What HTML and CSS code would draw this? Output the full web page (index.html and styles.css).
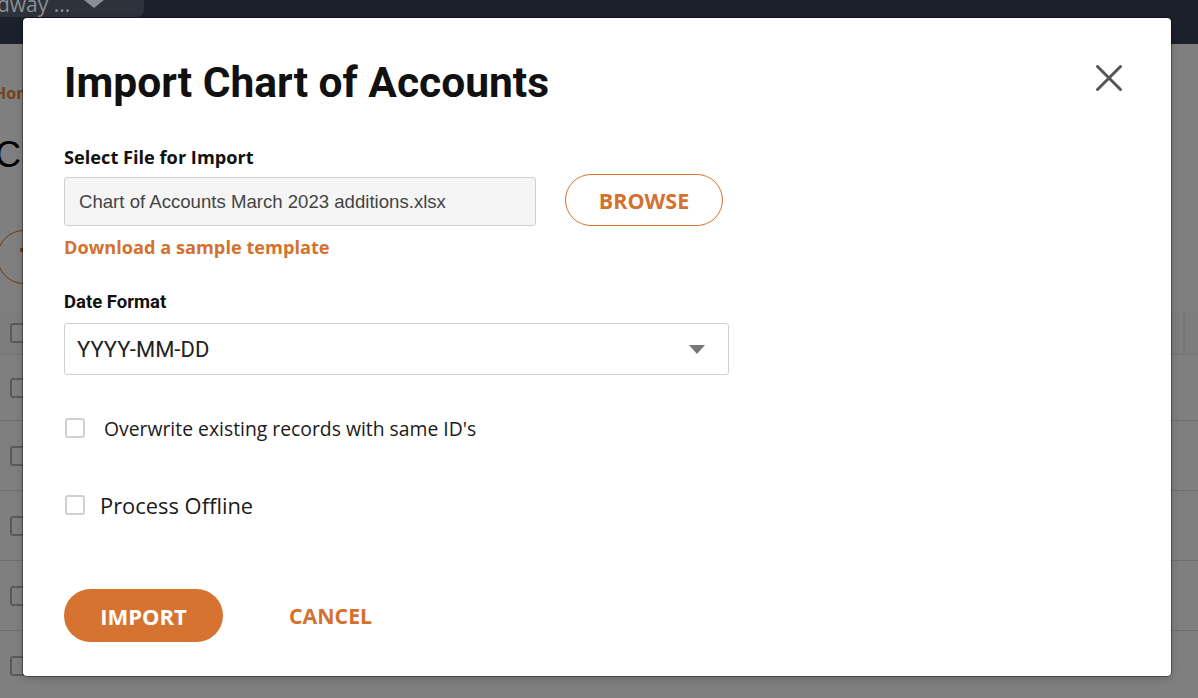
FILE: index.html
```html
<!DOCTYPE html>
<html lang="en">
<head>
<meta charset="utf-8">
<title>Import Chart of Accounts</title>
<link rel="stylesheet" href="styles.css">
</head>
<body>
<header class="topbar">
  <div class="loc-pill"><span class="loc-name">dway ...</span><span class="loc-caret"></span></div>
</header>
<main class="page">
  <div class="crumb">Home</div>
  <h1 class="page-title">Chart of Accounts</h1>
  <div class="circle-btn"><span class="circle-mark"></span></div>
  <div class="table">
    <div class="thead"><div class="cell-main"><span class="cb"></span></div><div class="cell-next"></div></div>
    <div class="row row-first"><span class="cb"></span></div>
    <div class="row"><span class="cb"></span></div>
    <div class="row"><span class="cb"></span></div>
    <div class="row"><span class="cb"></span></div>
    <div class="row"><span class="cb"></span></div>
  </div>
</main>
<div class="overlay"></div>
<div class="modal" role="dialog" aria-label="Import Chart of Accounts">
  <div class="modal-head">
    <h2 class="modal-title">Import Chart of Accounts</h2>
    <button class="close-btn" aria-label="Close">
      <svg width="32" height="32" viewBox="0 0 32 32"><path d="M4.5 4.5 L27.5 27.5 M27.5 4.5 L4.5 27.5" stroke="#555" stroke-width="3" stroke-linecap="round" fill="none"/></svg>
    </button>
  </div>
  <div class="field-label">Select File for Import</div>
  <div class="file-row">
    <div class="file-input">Chart of Accounts March 2023 additions.xlsx</div>
    <button class="btn-outline">BROWSE</button>
  </div>
  <a class="link">Download a sample template</a>
  <div class="date-label">Date Format</div>
  <div class="select"><span>YYYY-MM-DD</span><span class="caret"></span></div>
  <label class="check check-one"><span class="box"></span><span class="check-text">Overwrite existing records with same ID's</span></label>
  <label class="check check-two"><span class="box"></span><span class="check-text">Process Offline</span></label>
  <div class="actions">
    <button class="btn-primary">IMPORT</button>
    <button class="btn-text">CANCEL</button>
  </div>
</div>
</body>
</html>
```
FILE: styles.css
```css
* { box-sizing: border-box; }
html, body { margin: 0; padding: 0; }
body {
  width: 1198px;
  height: 698px;
  overflow: hidden;
  position: relative;
  background: #ffffff;
  font-family: "Open Sans", "Liberation Sans", sans-serif;
}

/* top bar */
.topbar {
  position: relative;
  z-index: 2;
  height: 44px;
  background: #1b202b;
  display: flex;
  align-items: flex-start;
}
.loc-pill {
  width: 144px;
  height: 17px;
  background: #2e323a;
  border-bottom-right-radius: 7px;
  display: flex;
  align-items: flex-end;
  overflow: hidden;
}
.loc-name {
  margin-left: -3px;
  font-family: "Open Sans", sans-serif;
  font-size: 21px;
  line-height: 21px;
  color: #8b8e94;
  margin-bottom: 2px;
  white-space: nowrap;
}
.loc-caret {
  margin-left: 14px;
  align-self: flex-start;
  width: 0;
  height: 0;
  border-left: 10px solid transparent;
  border-right: 10px solid transparent;
  border-top: 8px solid #8b8e94;
}

/* page behind */
.page {
  padding-top: 38px;
}
.crumb {
  margin-left: -6px;
  font-weight: 700;
  font-size: 16px;
  line-height: 22px;
  color: #e8853a;
}
.page-title {
  margin: 31px 0 0 -5px;
  font-family: "Liberation Sans", Arial, sans-serif;
  font-weight: 400;
  font-size: 36px;
  line-height: 40px;
  color: #000;
  white-space: nowrap;
}
.circle-btn {
  margin: 55px 0 0 -3px;
  width: 54px;
  height: 54px;
  border: 1.5px solid #d77330;
  border-radius: 50%;
  position: relative;
}
.circle-mark {
  position: absolute;
  left: 22px;
  top: 17px;
  width: 4px;
  height: 4px;
  background: #d77330;
  border-radius: 1px;
}
.table {
  margin-top: 27px;
}
.thead {
  height: 44px;
  display: flex;
  background: #fafafa;
  border-bottom: 1px solid #e6e6e6;
}
.cell-main {
  width: 1183px;
  display: flex;
  align-items: center;
  padding-left: 10px;
}
.cell-next {
  border-left: 2px solid #ececec;
  flex: 1;
}
.row {
  height: 70px;
  display: flex;
  align-items: center;
  padding-left: 10px;
  border-bottom: 1px solid #dcdcdc;
}
.row-first { height: 66px; }
.cb {
  width: 20px;
  height: 20px;
  border: 2px solid #b4b4b4;
  border-radius: 3px;
  background: #fff;
}

.overlay {
  position: absolute;
  inset: 0;
  z-index: 1;
  background: rgba(0, 0, 0, 0.5);
}

/* modal */
.modal {
  position: absolute;
  z-index: 3;
  left: 23px;
  top: 18px;
  width: 1148px;
  height: 658px;
  padding: 41px 41px 0 41px;
  background: #fff;
  border-radius: 4px;
  box-shadow: 0 0 0 1px rgba(0, 0, 0, 0.35), 0 2px 8px rgba(0, 0, 0, 0.2);
  display: flex;
  flex-direction: column;
  align-items: flex-start;
}
.modal-head {
  width: 100%;
  height: 48px;
  display: flex;
  justify-content: space-between;
  align-items: flex-start;
}
.modal-title {
  margin: 0;
  font-family: Roboto, "Liberation Sans", sans-serif;
  font-weight: 700;
  font-size: 42.5px;
  line-height: 48px;
  color: #111;
  white-space: nowrap;
}
.close-btn {
  margin: 3px 5px 0 0;
  width: 32px;
  height: 32px;
  padding: 0;
  border: 0;
  background: none;
  display: block;
}
.close-btn svg { display: block; }

.field-label {
  margin-top: 38px;
  font-weight: 700;
  font-size: 18.2px;
  line-height: 24px;
  color: #111;
}
.file-row {
  margin-top: 5px;
  display: flex;
  align-items: flex-end;
}
.file-input {
  width: 472px;
  height: 49px;
  border: 1px solid #cfcfd4;
  border-radius: 3px;
  background: #f5f5f5;
  padding-left: 14px;
  display: flex;
  align-items: center;
  font-family: "Liberation Sans", Arial, sans-serif;
  font-size: 18.6px;
  color: #444;
  white-space: nowrap;
}
.btn-outline {
  margin-left: 29px;
  width: 158px;
  height: 52px;
  border: 1px solid #d77330;
  border-radius: 26px;
  background: #fff;
  font-family: "Open Sans", sans-serif;
  font-weight: 700;
  font-size: 21.5px;
  color: #d5712e;
  padding: 0;
}
.link {
  margin-top: 9px;
  font-weight: 700;
  font-size: 18.2px;
  line-height: 24px;
  color: #d5712e;
}
.date-label {
  margin-top: 33px;
  font-family: Roboto, sans-serif;
  font-weight: 700;
  font-size: 18.5px;
  line-height: 20px;
  color: #111;
}
.select {
  margin-top: 11px;
  width: 665px;
  height: 52px;
  border: 1px solid #cfcfd4;
  border-radius: 3px;
  padding: 0 23px 0 12px;
  display: flex;
  align-items: center;
  justify-content: space-between;
  font-family: Roboto, sans-serif;
  font-size: 22px;
  color: #222;
}
.caret {
  width: 0;
  height: 0;
  border-left: 8px solid transparent;
  border-right: 8px solid transparent;
  border-top: 9px solid #777;
}
.check {
  display: flex;
  align-items: center;
  height: 24px;
  margin-left: 1px;
  color: #1a1a1a;
}
.box {
  width: 20px;
  height: 20px;
  border: 2px solid #cfd0d6;
  border-radius: 3px;
  background: #fff;
}
.check-one { margin-top: 41px; }
.check-one .check-text { margin-left: 19px; font-size: 19.35px; white-space: nowrap; }
.check-two { margin-top: 53px; }
.check-two .check-text { margin-left: 15px; font-size: 21.9px; white-space: nowrap; }

.actions {
  margin-top: 72px;
  display: flex;
  align-items: center;
}
.btn-primary {
  width: 159px;
  height: 53px;
  border: 0;
  border-radius: 27px;
  background: #d77330;
  color: #fff;
  font-family: "Open Sans", sans-serif;
  font-weight: 700;
  font-size: 22px;
  padding: 0;
}
.btn-text {
  margin-left: 66px;
  border: 0;
  background: none;
  padding: 0;
  font-family: "Open Sans", sans-serif;
  font-weight: 700;
  font-size: 21.3px;
  color: #d5712e;
}
```
